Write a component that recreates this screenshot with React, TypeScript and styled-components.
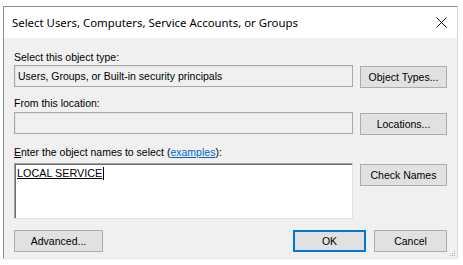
import React from 'react'
import styled, { createGlobalStyle } from 'styled-components'

const GlobalStyle = createGlobalStyle`
  html, body {
    margin: 0;
    padding: 0;
    background: #ffffff;
  }
  body {
    width: 463px;
    height: 265px;
    overflow: hidden;
    font-family: 'Liberation Sans', Arial, sans-serif;
  }
`

const Page = styled.div`
  width: 463px;
  height: 265px;
  padding: 6px 0 0 3px;
  box-sizing: border-box;
`

const Window = styled.div`
  position: relative;
  width: 455px;
  border-top: 1px solid #8c8c8c;
  border-left: 1px solid #8c8c8c;
  border-right: 1px solid #d8d8d8;
  border-bottom: 1px solid #e6e6e6;
  box-sizing: border-box;
`

const TitleBar = styled.div`
  display: flex;
  align-items: center;
  justify-content: space-between;
  height: 31px;
  padding: 0 8px 0 8px;
  background: #ffffff;
`

const Title = styled.span`
  font-family: 'Noto Sans', 'Open Sans', sans-serif;
  font-size: 11.4px;
  color: #000000;
`

const CloseIcon = styled.svg`
  width: 11px;
  height: 11px;
  margin-right: 2px;
`

const Body = styled.div`
  background: #f0f0f0;
  padding: 12px 10px 6px 10px;
  font-size: 10.5px;
  color: #000000;
`

const Row = styled.div`
  display: grid;
  grid-template-columns: 339px 87px;
  column-gap: 7px;
  align-items: start;
`

const Label = styled.div<{ $above: number; $below: number }>`
  height: 15px;
  line-height: 15px;
  margin-top: ${p => p.$above}px;
  margin-bottom: ${p => p.$below}px;
  white-space: nowrap;
`

const Field = styled.div`
  height: 22px;
  box-sizing: border-box;
  border: 1px solid #a9a9a9;
  box-shadow: inset 1px 1px 0 #e4e4e4;
  background: #f0f0f0;
  padding: 0 3px;
  line-height: 21px;
  white-space: nowrap;
`

const NamesBox = styled.div`
  height: 56px;
  box-sizing: border-box;
  background: #ffffff;
  border-top: 1px solid #a0a0a0;
  border-left: 1px solid #a0a0a0;
  border-right: 1px solid #e3e3e3;
  border-bottom: 1px solid #e3e3e3;
  box-shadow: inset 1px 1px 0 #6d6d6d;
  padding: 3px 2px;
`

const Resolved = styled.span`
  display: inline-block;
  font-size: 10.8px;
  line-height: 13px;
  text-decoration: underline;
  border-right: 1px solid #000000;
  padding-right: 1px;
`

const Button = styled.button<{ $width?: number; $primary?: boolean }>`
  width: ${p => (p.$width ? `${p.$width}px` : '100%')};
  height: 22px;
  margin-top: 1px;
  padding: 0;
  box-sizing: border-box;
  background: #e1e1e1;
  border: 1px solid ${p => (p.$primary ? '#0078d7' : '#adadad')};
  box-shadow: ${p => (p.$primary ? 'inset 0 0 0 1px #0078d7' : 'none')};
  font-family: 'Liberation Sans', Arial, sans-serif;
  font-size: 10.5px;
  color: #000000;
`

const Link = styled.a`
  color: #0066cc;
  text-decoration: underline;
`

const Footer = styled.div`
  display: flex;
  align-items: center;
  gap: 8px;
  margin-top: 10px;
`

const Spacer = styled.div`
  flex: 1;
`

const Grip = styled.svg`
  position: absolute;
  right: 1px;
  bottom: 1px;
  width: 6px;
  height: 6px;
`

export default function App() {
  return (
    <Page>
      <GlobalStyle />
      <Window>
        <TitleBar>
          <Title>Select Users, Computers, Service Accounts, or Groups</Title>
          <CloseIcon viewBox="0 0 11 11">
            <path d="M0.5 0.5 L10.5 10.5 M10.5 0.5 L0.5 10.5" stroke="#111" strokeWidth="1" />
          </CloseIcon>
        </TitleBar>
        <Body>
          <Label $above={0} $below={0}>Select this object type:</Label>
          <Row>
            <Field>Users, Groups, or Built-in security principals</Field>
            <Button>Object Types...</Button>
          </Row>
          <Label $above={8} $below={1}>From this location:</Label>
          <Row>
            <Field />
            <Button>Locations...</Button>
          </Row>
          <Label $above={10} $below={3}>
            <u>E</u>nter the object names to select (<Link>examples</Link>):
          </Label>
          <Row>
            <NamesBox>
              <Resolved>LOCAL SERVICE</Resolved>
            </NamesBox>
            <Button>Check Names</Button>
          </Row>
          <Footer>
            <Button $width={89}>Advanced...</Button>
            <Spacer />
            <Button $width={73} $primary>OK</Button>
            <Button $width={73}>Cancel</Button>
          </Footer>
        </Body>
        <Grip viewBox="0 0 6 6">
          <rect x="4" y="0" width="1" height="1" fill="#b0b0b0" />
          <rect x="2" y="2" width="1" height="1" fill="#b0b0b0" />
          <rect x="4" y="2" width="1" height="1" fill="#b0b0b0" />
          <rect x="0" y="4" width="1" height="1" fill="#b0b0b0" />
          <rect x="2" y="4" width="1" height="1" fill="#b0b0b0" />
          <rect x="4" y="4" width="1" height="1" fill="#b0b0b0" />
        </Grip>
      </Window>
    </Page>
  )
}
